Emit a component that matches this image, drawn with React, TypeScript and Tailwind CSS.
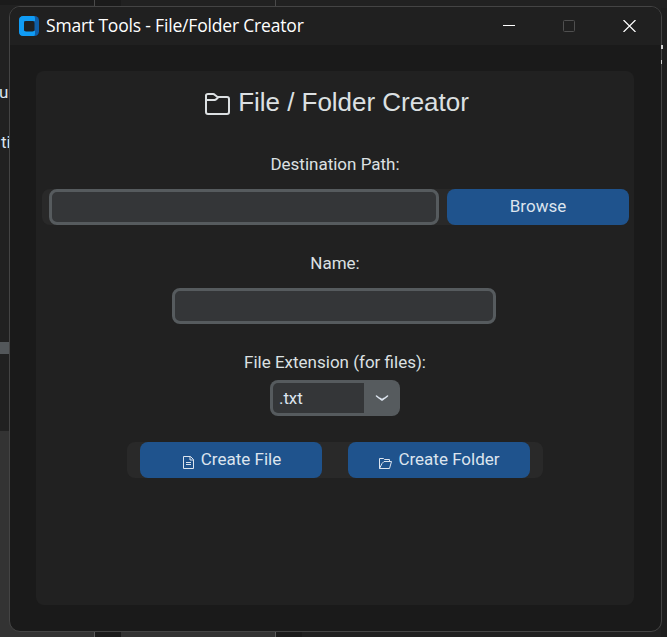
import type { ReactNode } from "react";

function Desktop() {
  return (
    <div className="absolute inset-0 overflow-hidden bg-[#212121] text-[17px] text-[#dce4ee]">
      <div className="absolute left-0 top-0 h-[5px] w-[94px] bg-[#1b1b1b]" />
      <div className="absolute left-[94px] top-0 h-[7px] w-[27px] border-l border-[#4a4a4a] bg-[#1b1b1b]" />
      <div className="absolute left-[275px] top-0 h-[7px] w-px bg-[#4a4a4a]" />
      <div className="absolute right-0 top-[8px] h-[629px] w-[6px] bg-[#1e1e1e]" />
      <div className="absolute left-[-1px] top-[82px] leading-5">un</div>
      <div className="absolute left-[1px] top-[132px] leading-5">ti</div>
      <div className="absolute left-0 top-[342px] h-[12px] w-[10px] bg-[#53575a]" />
      <div className="absolute left-0 top-[431px] h-[206px] w-[275px] bg-[#333333]" />
      <div className="absolute left-[94px] top-[620px] h-[17px] w-[27px] border-l border-[#5a5a5a] bg-[#1b1b1b]" />
      <div className="absolute left-[275px] top-[620px] h-[17px] w-[27px] border-l border-[#5a5a5a] bg-[#1b1b1b]" />
    </div>
  );
}

function Logo() {
  return (
    <svg width="20" height="20" viewBox="0 0 20 20">
      <rect width="20" height="20" rx="4.5" fill="#0f5ea8" />
      <path d="M4.500 0H14.500Q16 0 16 2V5H5V15H16v3q0 2-1.500 2H4.500Q0 20 0 15.500V4.500Q0 0 4.500 0Z" fill="#109cf5" />
      <rect x="5" y="5" width="10.500" height="10.500" rx="2" fill="#1d2023" />
    </svg>
  );
}

function TitleBar() {
  return (
    <header className="flex h-[38px] shrink-0 items-center bg-[#202020] pl-[9px]">
      <Logo />
      <span className="ml-[7px] mt-[-1px] whitespace-nowrap font-['Open_Sans','Noto_Sans',sans-serif] text-[17.5px] tracking-[-0.18px] text-white">
        Smart Tools - File/Folder Creator
      </span>
      <div className="ml-auto flex items-center gap-[48px] pr-[25px]">
        <svg width="12" height="12" viewBox="0 0 12 12">
          <path d="M0 5.500H12" stroke="#fff" />
        </svg>
        <svg width="12" height="12" viewBox="0 0 12 12" fill="none">
          <rect x=".5" y=".5" width="11" height="11" rx="1" stroke="#4f4f4f" />
        </svg>
        <svg width="13" height="12" viewBox="0 0 13 12">
          <path d="M.5 0 12.500 12M12.500 0 .5 12" stroke="#fff" strokeWidth="1.200" />
        </svg>
      </div>
    </header>
  );
}

function Label({ children }: { children: ReactNode }) {
  return <label className="text-[17px] leading-5 text-[#dce0e2]">{children}</label>;
}

function BlueButton({ children }: { children: ReactNode }) {
  return (
    <button className="flex h-9 w-[182px] shrink-0 items-center justify-center rounded-[8px] bg-[#1f538d] pb-[2px] text-[17px] leading-5 text-[#dce4ee]">
      {children}
    </button>
  );
}

export default function App() {
  return (
    <div className="relative h-[637px] w-[667px] overflow-hidden font-['Roboto',sans-serif]">
      <Desktop />
      <main className="absolute left-[9px] top-[6px] flex h-[626px] w-[653px] flex-col overflow-hidden rounded-[11px] border border-[#444444] bg-[#1a1a1a]">
        <TitleBar />
        <section className="ml-[26px] mt-[26px] flex h-[534px] w-[598px] flex-col items-center rounded-[8px] bg-[#212121]">
          <h1 className="ml-[4px] mt-[15px] flex h-8 items-center gap-[8px] whitespace-nowrap font-['Liberation_Sans',Arial,sans-serif] text-[26px] tracking-[-0.03px] text-[#dce0e2]">
            <svg className="mt-[3px]" width="25" height="24" viewBox="0 0 25 24" fill="none" stroke="#dce0e2" strokeWidth="2" strokeLinejoin="round">
              <path d="M1 20V3.500Q1 2 3 2H8Q9 2 10 3L12.500 5H22Q24 5 24 7V20Q24 22 22 22H3Q1 22 1 20ZM1 8H9.500Q10.500 8 11.500 7L13.500 5" />
            </svg>
            <span>File / Folder Creator</span>
          </h1>
          <div className="mt-[36px] flex"><Label>Destination Path:</Label></div>
          <div className="ml-[6px] mt-[15px] flex h-9 w-[587px] justify-between self-start rounded-[8px] bg-[#292929] pl-[7px]">
            <input className="h-9 w-[390px] rounded-[8px] border-[3px] border-[#565b5e] bg-[#343638]" />
            <BlueButton>Browse</BlueButton>
          </div>
          <div className="mt-[28px] flex"><Label>Name:</Label></div>
          <input className="mr-[2px] mt-[15px] h-9 w-[324px] rounded-[8px] border-[3px] border-[#565b5e] bg-[#343638]" />
          <div className="mt-[28px] flex"><Label>File Extension (for files):</Label></div>
          <div className="mt-[8px] flex h-9 w-[130px] overflow-hidden rounded-[8px] bg-[#565b5e]">
            <div className="my-[3px] ml-[3px] flex w-[91px] items-center rounded-l-[5px] bg-[#343638] pl-[6px] pt-[1px] text-[17px] tracking-[-0.1px] text-[#dce4ee]">.txt</div>
            <div className="flex flex-1 items-center justify-center">
              <svg width="14" height="8" viewBox="0 0 14 8" fill="none" stroke="#dce4ee" strokeWidth="1.600" strokeLinecap="round" strokeLinejoin="round">
                <path d="M1.500 2 4 4Q7 6.500 10 4L12.500 2M5 4.500 7 6 9 4.500" />
              </svg>
            </div>
          </div>
          <div className="mt-[26px] flex h-9 w-[416px] justify-between rounded-[8px] bg-[#292929] px-[13px]">
            <BlueButton>
              <svg className="ml-[2px] mr-[7px] mt-[7px]" width="11" height="13" viewBox="0 0 11 13" fill="none" stroke="#dce4ee">
                <path d="M.5.500H7.500L10.500 3.500V12.500H.5ZM7 .5V4H10.500M3 6.500H8M3 8.500H8" />
              </svg>
              Create File
            </BlueButton>
            <BlueButton>
              <svg className="ml-px mr-[6px] mt-[7px]" width="13" height="12" viewBox="0 0 13 12" fill="none" stroke="#dce4ee" strokeLinejoin="round">
                <path d="M.5 11.500V1.500H4.500L5.500 2.500H10.500V4.500M.5 11.500 3 6.500 5 4.500H12.500L10.500 11.500Z" />
              </svg>
              Create Folder
            </BlueButton>
          </div>
        </section>
      </main>
      {/* Glyph fragments from the window behind the right edge. */}
      <div className="absolute left-[661px] top-[45px] h-[4px] w-[2px] bg-[#d0d0d0]" />
      <div className="absolute left-[661px] top-[60px] h-[4px] w-px bg-[#d0d0d0]" />
    </div>
  );
}
